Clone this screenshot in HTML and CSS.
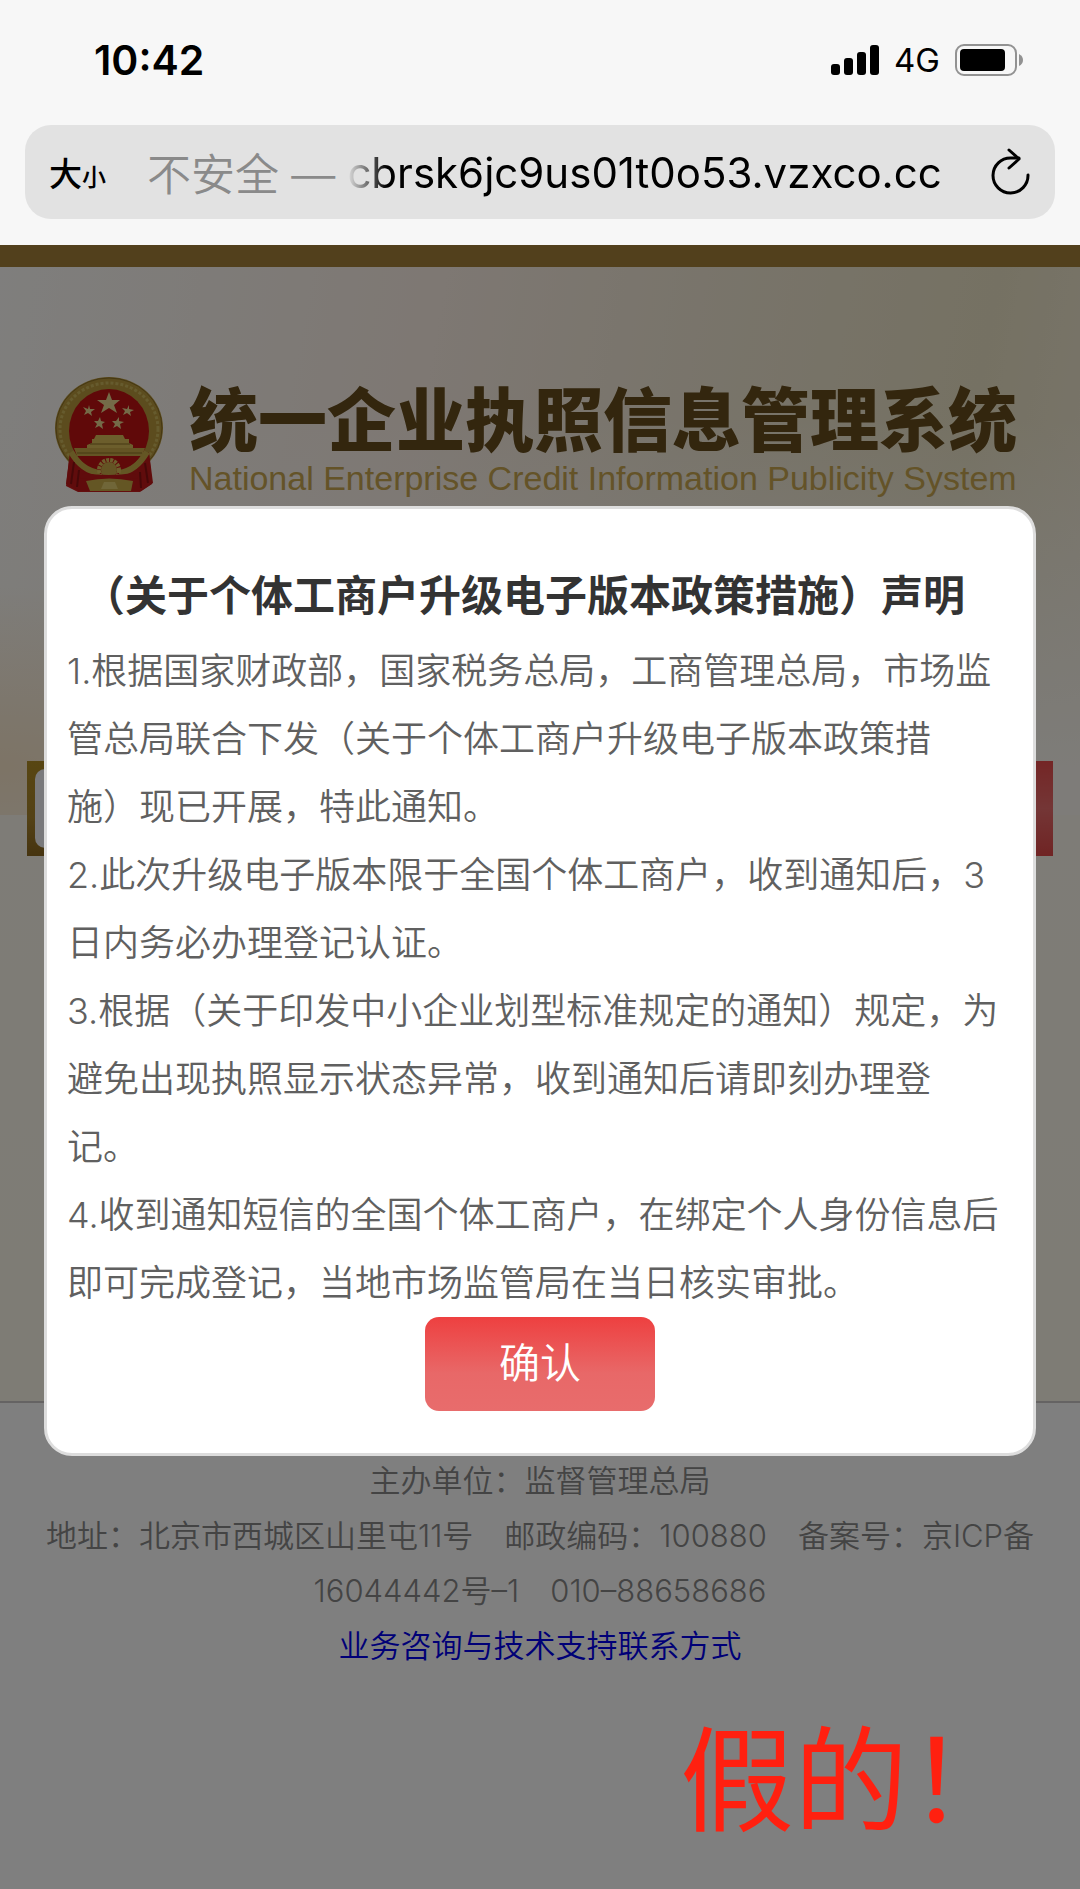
FILE: index.html
```html
<!DOCTYPE html>
<html lang="zh-CN">
<head>
    <meta charset="UTF-8">
    <meta name="viewport" content="width=device-width, initial-scale=1.0">
    <title>假的！</title>
    <link rel="stylesheet" href="styles.css">
</head>
<body>
    <header class="browser">
        <div class="status-bar">
            <span class="time">10:42</span>
            <div class="status-icons">
                <svg width="48" height="30" viewBox="0 0 48 30">
                    <rect x="0" y="19" width="9" height="11" rx="3"/>
                    <rect x="13" y="13" width="9" height="17" rx="3"/>
                    <rect x="26" y="7" width="9" height="23" rx="3"/>
                    <rect x="39" y="0" width="9" height="30" rx="3"/>
                </svg>
                <span class="network">4G</span>
                <svg width="68" height="32" viewBox="0 0 68 32">
                    <rect x="1" y="1" width="60" height="30" rx="8" fill="none" stroke="#929292" stroke-width="2"/>
                    <rect x="5" y="5" width="45" height="22" rx="4"/>
                    <path d="M64 10 Q68 12 68 16 Q68 20 64 22 Z" fill="#929292"/>
                </svg>
            </div>
        </div>
        <div class="address-bar">
            <button class="text-size" aria-label="大小">大<small>小</small></button>
            <label class="insecure" for="url">不安全 —</label>
            <input class="url" id="url" type="text" value="cbrsk6jc9us01t0o53.vzxco.cc" readonly>
            <button class="reload" aria-label="刷新">
                <svg width="40" height="48" viewBox="0 0 40 48" fill="none" stroke="#000" stroke-width="3" stroke-linecap="round" stroke-linejoin="round">
                    <path d="M37 27 A17.5 17.5 0 1 1 20 10 L28 10"/>
                    <path d="M18 2 L28 11 L18 20"/>
                </svg>
            </button>
        </div>
    </header>

    <main class="page">
        <section class="banner">
            <div class="brand">
                <svg class="emblem" width="110" height="117" viewBox="0 0 110 117">
                    <path d="M16 76 L12 110 L24 116 L86 116 L98 108 L95 76 Z" fill="#c81c1c"/>
                    <ellipse cx="55" cy="52" rx="54" ry="51" fill="#b8983c"/>
                    <ellipse cx="55" cy="53" rx="49" ry="46" fill="none" stroke="#cdb75c" stroke-width="3" stroke-dasharray="3 2"/>
                    <ellipse cx="55" cy="52" rx="53" ry="50" fill="none" stroke="#8c7026" stroke-width="1"/>
                    <ellipse cx="55" cy="55" rx="40" ry="42" fill="#c01212"/>
                    <g fill="#e8d690">
                        <polygon points="55,16 58,24 66,24 60,29 63,37 55,32 47,37 50,29 43,24 52,24"/>
                        <polygon points="35,29 36,33 41,33 37,36 38,40 34,37 30,39 32,35 29,31 34,33"/>
                        <polygon points="75,29 75,33 80,34 76,36 77,40 73,37 69,39 71,35 68,32 73,33"/>
                        <polygon points="46,41 47,45 51,46 48,48 49,53 45,50 41,52 43,48 40,45 44,45"/>
                        <polygon points="65,41 65,45 70,46 66,48 67,53 63,50 59,52 61,48 58,45 62,45"/>
                    </g>
                    <path d="M42 59 H69 L71 63 H75 V67 L79 69 V73 H33 V69 L38 67 V63 H40 Z" fill="#d8bc58"/>
                    <path d="M20 72 H91 L88 80 H23 Z" fill="#c8a848"/>
                    <path d="M36 68 H76 M23 77 H88" stroke="#8c7026" stroke-width="1"/>
                    <path d="M16 76 Q26 98 44 97 L67 97 Q84 98 95 76 L99 107 L87 115 L25 115 L12 108 Z" fill="#c01818"/>
                    <path d="M17 76 Q28 95 46 97 M93 76 Q82 95 65 97" fill="none" stroke="#c8ac48" stroke-width="6"/>
                    <circle cx="55" cy="94" r="10" fill="none" stroke="#d8bc58" stroke-width="4" stroke-dasharray="3 1"/>
                    <circle cx="55" cy="94" r="8" fill="#c8a848"/>
                    <path d="M30 97 Q54 101 80 97 L84 102 Q54 107 26 102 Z" fill="#c01818"/>
                    <path d="M32 105 Q55 100 79 105 L77 115 H36 Z" fill="#c8ac48"/>
                    <path d="M47 113 L50 106 H61 L64 113 Z" fill="#e0cc70"/>
                    <path d="M20 86 L17 108 M25 94 L23 111 M86 96 L87 112 M91 87 L94 107" stroke="#8c1010" stroke-width="2"/>
                </svg>
                <div class="brand-text">
                    <h1>统一企业执照信息管理系统</h1>
                    <p>National Enterprise Credit Information Publicity System</p>
                </div>
            </div>
            <div class="search">
                <div class="search-box">
                    <input class="search-input" type="text" aria-label="搜索">
                </div>
                <button class="search-btn" aria-label="查询"></button>
            </div>
        </section>

        <footer class="footer">
            <p>主办单位：监督管理总局</p>
            <p>地址：北京市西城区山里屯11号&emsp;邮政编码：100880&emsp;备案号：京ICP备<br>16044442号–1&emsp;010–88658686</p>
            <a href="#">业务咨询与技术支持联系方式</a>
        </footer>

        <div class="overlay">
            <div class="modal" role="dialog" aria-labelledby="modal-title">
                <h2 id="modal-title">（关于个体工商户升级电子版本政策措施）声明</h2>
                <p>1.根据国家财政部，国家税务总局，工商管理总局，市场监<br>管总局联合下发（关于个体工商户升级电子版本政策措<br>施）现已开展，特此通知。</p>
                <p>2.此次升级电子版本限于全国个体工商户，收到通知后，3<br>日内务必办理登记认证。</p>
                <p>3.根据（关于印发中小企业划型标准规定的通知）规定，为<br>避免出现执照显示状态异常，收到通知后请即刻办理登<br>记。</p>
                <p>4.收到通知短信的全国个体工商户，在绑定个人身份信息后<br>即可完成登记，当地市场监管局在当日核实审批。</p>
                <button class="confirm">确认</button>
            </div>
        </div>

        <strong class="fake-mark">假的！</strong>
    </main>
</body>
</html>
```
FILE: styles.css
```css
* {
    box-sizing: border-box;
}

body {
    margin: 0;
    min-height: 100vh;
    display: flex;
    flex-direction: column;
    font-family: Inter, "Noto Sans CJK SC", sans-serif;
    text-spacing-trim: space-all;
    background: #f7f7f7;
}

h1, h2, p {
    margin: 0;
}

button, input {
    font-family: inherit;
    border: none;
    padding: 0;
    background: none;
}

/* Phone browser */
.browser {
    padding: 36px 25px 26px;
}

.status-bar {
    display: flex;
    justify-content: space-between;
    align-items: center;
    height: 48px;
    margin-bottom: 41px;
    padding: 0 32px 0 69px;
}

.time {
    font-size: 41px;
    font-weight: 600;
}

.status-icons {
    display: flex;
    align-items: center;
    gap: 15px;
}

.network {
    font-size: 33px;
}

.address-bar {
    display: flex;
    align-items: center;
    height: 94px;
    padding: 0 24px;
    border-radius: 26px;
    background: #e2e2e2;
}

.text-size {
    font-size: 33px;
    font-weight: 500;
    white-space: nowrap;
}

.text-size small {
    font-size: 24px;
}

.insecure {
    margin-left: 41px;
    font-size: 44px;
    font-weight: 350;
    color: #8a8a8a;
    white-space: nowrap;
}

.url {
    flex: 1;
    min-width: 0;
    margin: 0 50px 0 12px;
    font-size: 42px;
    text-align: right;
    color: #000;
    -webkit-mask-image: linear-gradient(90deg, transparent, #000 40px);
    mask-image: linear-gradient(90deg, transparent, #000 40px);
}

.reload svg {
    display: block;
}

/* Site page */
.page {
    position: relative;
    flex: 1;
    display: flex;
    flex-direction: column;
    background: #fff;
}

.banner {
    height: 1158px;
    padding: 109px 27px 0;
    border-top: 22px solid #a48038;
    border-bottom: 2px solid #cac6c6;
    background:
        radial-gradient(ellipse 420px 180px at 0 500px, #fae8cc, transparent) top / 100% 548px no-repeat,
        linear-gradient(180deg, transparent 150px, #fcf9f2 500px) top / 100% 548px no-repeat,
        linear-gradient(100deg, #fefdfa 0%, #fcf0e6 38%, #f2e9d6 60%, #ebe3c6 85%, #f2ead6 100%) top / 100% 548px no-repeat,
        linear-gradient(180deg, #fcf9f2, #fdf8ea);
}

.brand {
    display: flex;
    gap: 25px;
    padding-left: 27px;
}

.emblem {
    flex: none;
}

.brand-text {
    white-space: nowrap;
}

.brand-text h1 {
    font-size: 69px;
    line-height: 90px;
    font-weight: 900;
    color: #664c1c;
}

.brand-text p {
    font-family: "Liberation Sans", sans-serif;
    font-size: 34px;
    line-height: 24px;
    color: #c8a650;
}

.search {
    display: flex;
    height: 95px;
    margin-top: 268px;
}

.search-box {
    flex: 1;
    padding: 8px;
    background: linear-gradient(180deg, #b08c24, #a8842c 60%, #8c6820);
}

.search-input {
    width: 100%;
    height: 100%;
    border-radius: 10px;
    background: #f4f4f8;
}

.search-btn {
    width: 190px;
    background: linear-gradient(180deg, #e84c4c, #e86c6c 50%, #e04848);
}

.footer {
    flex: 1;
    padding: 50px 32px 0;
    font-size: 31px;
    line-height: 55px;
    font-weight: 350;
    text-align: center;
    color: #888;
}

.footer a {
    color: #0000ee;
    text-decoration: none;
}

/* Notice */
.overlay {
    position: absolute;
    inset: 0;
    padding: 261px 44px 0;
    background: rgba(0, 0, 0, 0.5);
}

.modal {
    padding: 56px 20px 42px;
    border: 3px solid #ddd;
    border-radius: 28px;
    background: #fff;
}

.modal h2 {
    margin-bottom: 10px;
    padding-right: 32px;
    font-size: 42px;
    line-height: 62px;
    font-weight: 600;
    text-align: center;
    white-space: nowrap;
    color: #333;
}

.modal p {
    font-size: 36px;
    line-height: 68px;
    font-weight: 350;
    color: #606060;
}

.confirm {
    display: block;
    width: 230px;
    height: 94px;
    margin: 0 auto;
    padding-bottom: 8px;
    border-radius: 14px;
    font-size: 41px;
    font-weight: 350;
    color: #fff;
    background: linear-gradient(180deg, #ee4040, #e86868 60%, #e86c6c);
}

.fake-mark {
    position: absolute;
    right: 58px;
    bottom: 28px;
    font-size: 114px;
    line-height: 160px;
    font-weight: 400;
    color: #ff2010;
}
```
